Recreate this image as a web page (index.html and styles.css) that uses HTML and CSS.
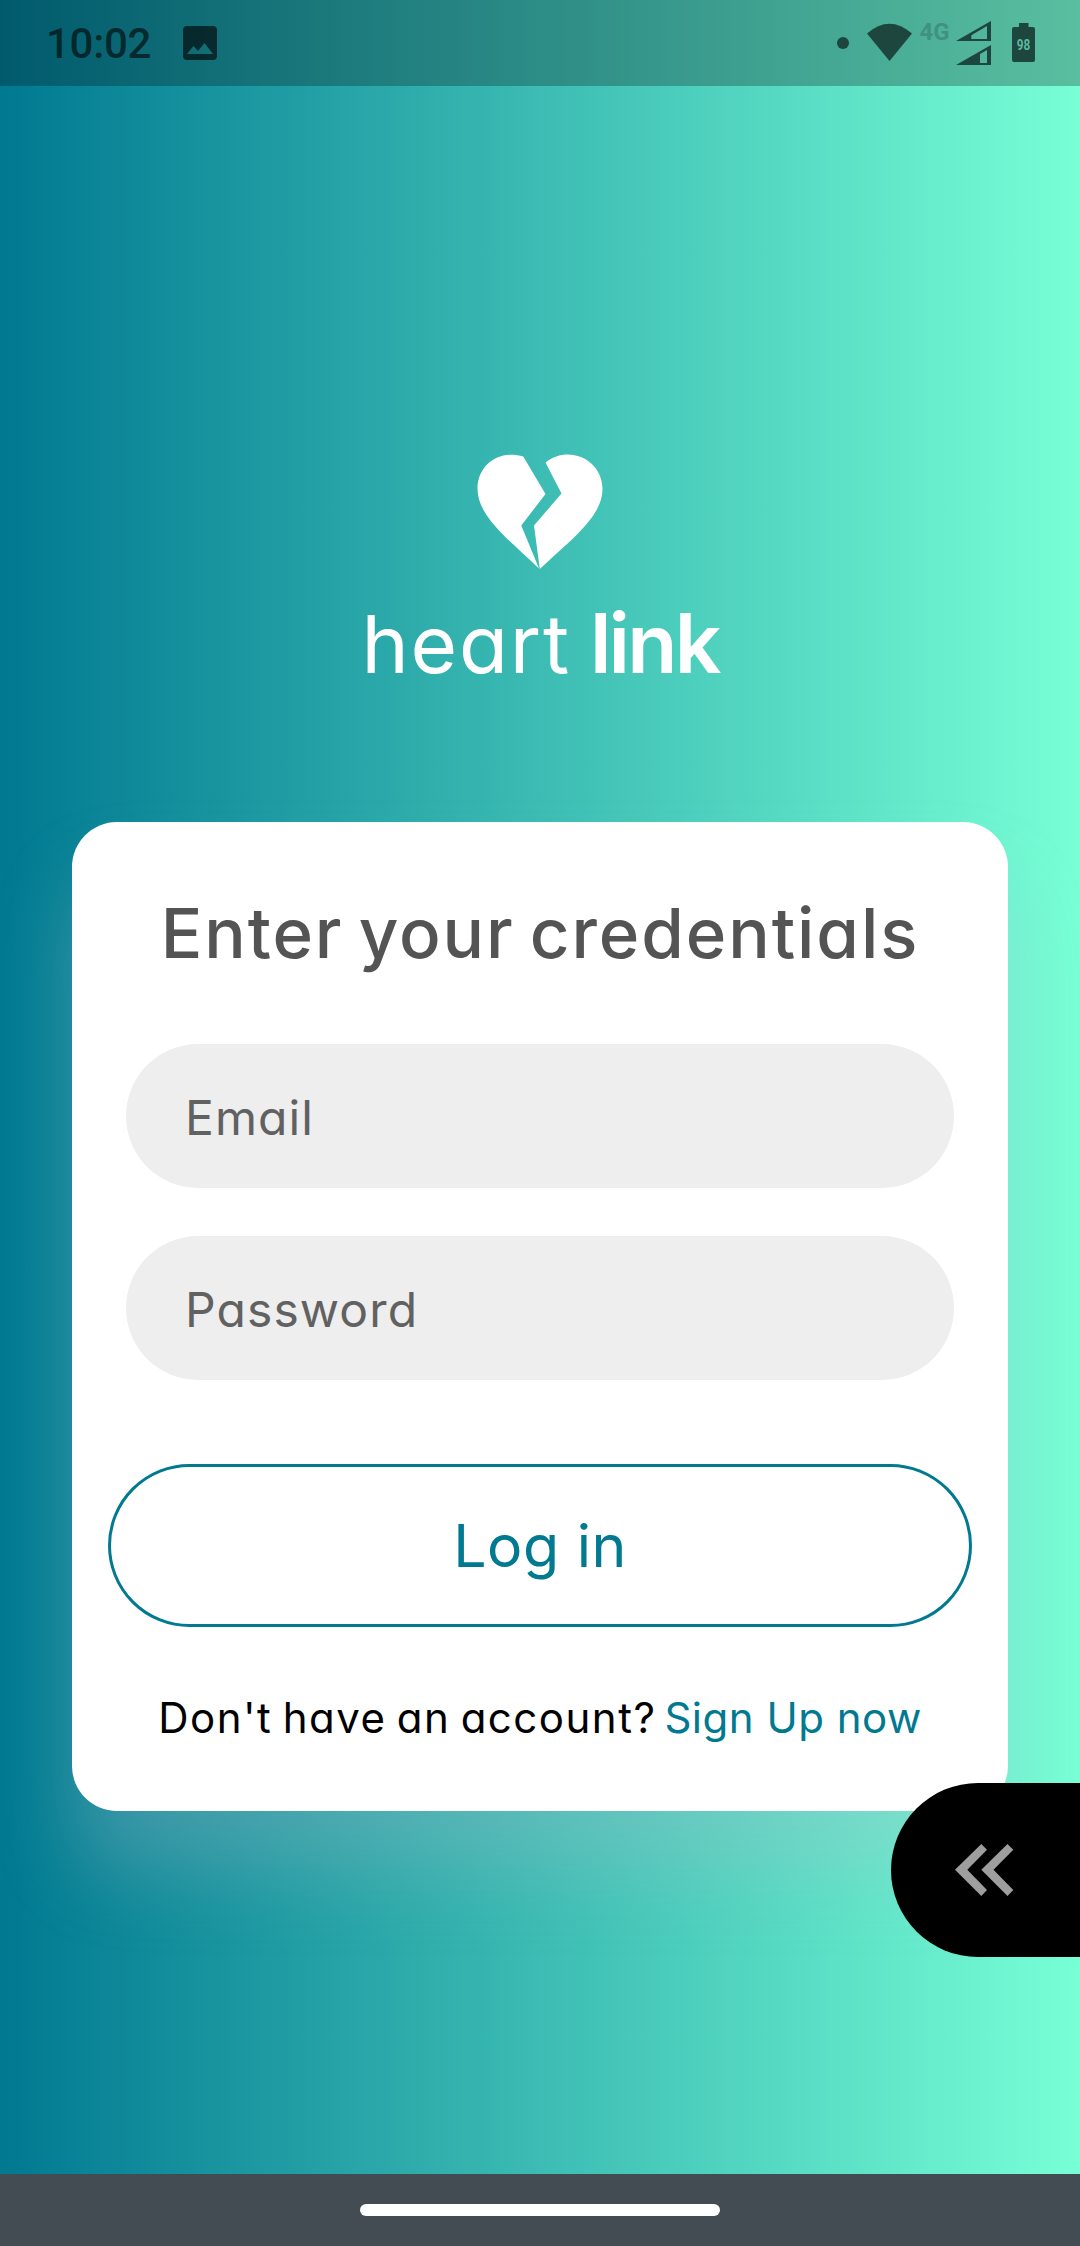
FILE: index.html
```html
<!DOCTYPE html>
<html lang="en">
<head>
<meta charset="utf-8">
<title>heart link</title>
<link rel="stylesheet" href="styles.css">
</head>
<body>
<div class="screen">
  <header class="status">
    <span class="clock">10:02</span>
    <svg class="photo" width="34" height="34" viewBox="0 0 34 34"><path fill-rule="evenodd" d="M4 0H30Q34 0 34 4V30Q34 34 30 34H4Q0 34 0 30V4Q0 0 4 0ZM4 28H30L21.500 17L15 25L10.500 20Z"/></svg>
    <svg class="tray" width="200" height="70" viewBox="837 8 200 70">
      <circle cx="843" cy="43" r="6"/>
      <path d="M867 33.500Q889.500 14 912 33.500L889.500 61Z"/>
      <text class="net" x="919.500" y="39.700">4G</text>
      <path fill-rule="evenodd" d="M956 41L991 21V41ZM971.300 39H987V26L971.300 35.200Z"/>
      <path fill-rule="evenodd" d="M956 65L991 45V65ZM980 63H987V50L980 54Z"/>
      <path d="M1019 23H1028.500V27H1033Q1035 27 1035 29V60Q1035 62 1033 62H1014Q1012 62 1012 60V29Q1012 27 1014 27H1019Z"/>
      <text class="level" x="1016.800" y="49.700" textLength="13.500" lengthAdjust="spacingAndGlyphs">98</text>
    </svg>
  </header>
  <main class="content">
    <section class="brand">
      <svg width="126" height="116" viewBox="0 0 126 116"><path d="M46.300 2.500C22 -5 0.500 11 0.500 34.500C0.500 62 30 84 62 114.500L44.300 71.500L68.500 40ZM68.500 8.500C92 -10 125.500 6 125.500 35C125.500 62 96 84 62.800 115L57 71.500L84.500 39.500Z"/></svg>
      <h1 class="name"><span class="first">heart</span><span class="second">link</span></h1>
    </section>
    <form class="card">
      <h2 class="title">Enter your credentials</h2>
      <input class="field" type="text" placeholder="Email">
      <input class="field password" type="password" placeholder="Password">
      <button class="login" type="button">Log in</button>
      <p class="signup"><span class="question">Don't have an account?</span><a class="link">Sign Up now</a></p>
    </form>
  </main>
  <footer class="nav"><div class="handle"></div></footer>
  <div class="drawer">
    <svg width="59" height="52" viewBox="0 0 59 52"><path d="M26.300 0L32 5.700L12.300 25.800L32 46L26.300 52L0 25.800ZM52.500 0L58.300 5.700L38.500 25.800L58.300 46L52.500 52L26.300 25.800Z"/></svg>
  </div>
</div>
</body>
</html>
```
FILE: styles.css
```css
* { box-sizing: border-box; }
body { margin: 0; font-family: Inter, "Liberation Sans", sans-serif; font-feature-settings: "cv11"; }
h1, h2, p { margin: 0; }
.screen { position: relative; width: 1080px; height: 2246px; display: flex; flex-direction: column; overflow: hidden; background: linear-gradient(90deg, #007991, #78ffd6); }
.status { height: 86px; flex: none; display: flex; align-items: center; padding: 0 43px 0 46px; background: rgba(0, 0, 0, .25); font-family: Roboto, sans-serif; }
.clock { font-size: 42px; font-weight: 500; line-height: 50px; letter-spacing: -.3px; padding-top: 2px; color: rgba(0, 0, 0, .62); }
.photo { margin-left: 32px; fill: rgba(0, 0, 0, .62); }
.tray { margin-left: auto; fill: #1d463e; }
.net { font-size: 24px; font-weight: 700; fill: #409180; }
.level { font-size: 14px; font-weight: 700; fill: #5bbb9e; }
.content { flex: 1; display: flex; flex-direction: column; align-items: center; padding-top: 367.500px; }
.brand { display: flex; flex-direction: column; align-items: center; height: 368.800px; fill: #fff; color: #fff; }
.name { display: flex; align-items: baseline; gap: 19px; margin-top: 24px; line-height: 100px; font-size: 80px; }
.first { font-weight: 400; letter-spacing: 1.8px; }
.second { font-weight: 600; font-size: 82px; letter-spacing: -2.800px; }
.card { width: 936px; height: 988.300px; padding: 71px 36px 0; display: flex; flex-direction: column; align-items: center; border-radius: 45px; background: #fff; box-shadow: 0 60px 80px rgba(180, 194, 202, .27); }
.title { font-size: 69px; line-height: 80px; font-weight: 500; letter-spacing: 1.900px; word-spacing: -5px; color: #545454; white-space: nowrap; margin-bottom: 71px; }
.field { width: 828px; height: 144px; flex: none; border: 0; border-radius: 72px; background: #eee; padding: 2px 60px 0 59px; font: 400 48px Inter, sans-serif; font-feature-settings: "cv11"; letter-spacing: 1.1px; outline: 0; }
.field::placeholder { color: #616161; opacity: 1; }
.password { margin-top: 48px; }
.login { width: 864px; height: 163px; flex: none; margin-top: 84px; padding: 0; border: 3px solid #007991; border-radius: 82px; background: #fff; color: #007991; font: 400 59px Inter, sans-serif; font-feature-settings: "cv11"; letter-spacing: .5px; }
.signup { display: flex; gap: 8px; margin-top: 61px; font-size: 42px; line-height: 60px; white-space: nowrap; color: #000; }
.question { letter-spacing: 1.500px; word-spacing: -3px; }
.link { color: #007991; letter-spacing: .5px; }
.nav { height: 72px; flex: none; display: flex; align-items: center; justify-content: center; background: #444c53; }
.handle { width: 360px; height: 12px; border-radius: 6px; background: #fff; }
.drawer { position: absolute; right: 0; top: 1782.500px; width: 189px; height: 174px; padding-left: 64px; display: flex; align-items: center; border-radius: 87px 0 0 87px; background: #000; fill: #9e9e9e; }
```
